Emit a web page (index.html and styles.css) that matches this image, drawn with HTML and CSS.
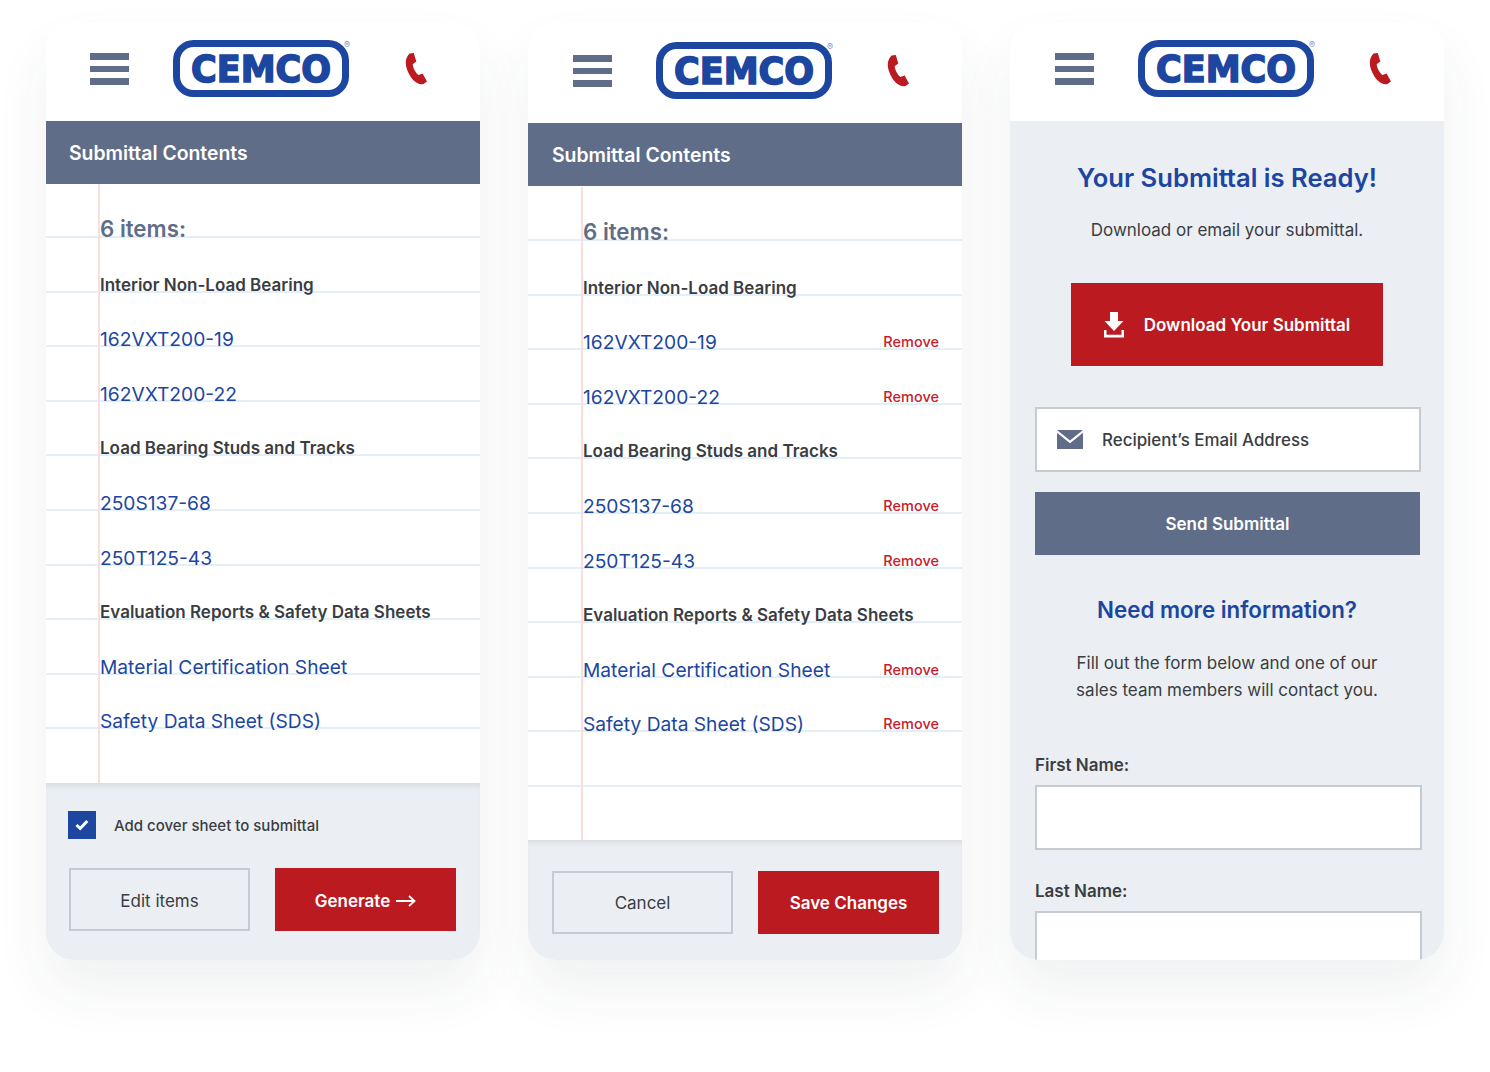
FILE: index.html
```html
<!DOCTYPE html>
<html lang="en">
  <head>
    <meta charset="UTF-8" />
    <meta name="viewport" content="width=device-width, initial-scale=1.0" />
    <title>CEMCO Submittal</title>
    <link rel="stylesheet" href="styles.css">
  </head>
  <body>
    <svg class="icon-defs" width="0" height="0">
      <symbol id="phone-icon" viewBox="0 0 22 32">
        <path d="M4.500 0.500 L8.800 0 L11.300 8.600 L7.700 11.200 C8 15 10.600 19.600 13.400 22 L17.600 20.400 L22 28.400 L18.500 31 C12.400 32.400 7.200 27.400 3.800 20.600 C0.800 14.400 -1.400 6.600 4.500 0.500 Z" fill="#bb1a20" />
      </symbol>
    </svg>

    <div class="phones">
      <!-- Contents -->
      <div class="phone">
        <div class="header">
          <div class="menu"><span></span><span></span><span></span></div>
          <svg class="logo" viewBox="0 0 184 60">
            <rect x="3.500" y="3.500" width="169" height="50" rx="17" fill="#fff" stroke="#1c469f" stroke-width="7" />
            <text x="88" y="42" text-anchor="middle" textLength="140" lengthAdjust="spacingAndGlyphs" class="logo-word">CEMCO</text>
            <text x="171" y="8" class="logo-mark">®</text>
          </svg>
          <svg class="call"><use href="#phone-icon" /></svg>
        </div>
        <div class="title-bar">Submittal Contents</div>
        <div class="sheet">
          <div class="row count">6 items:</div>
          <div class="row category">Interior Non-Load Bearing</div>
          <div class="row"><a>162VXT200-19</a></div>
          <div class="row"><a>162VXT200-22</a></div>
          <div class="row category">Load Bearing Studs and Tracks</div>
          <div class="row"><a>250S137-68</a></div>
          <div class="row"><a>250T125-43</a></div>
          <div class="row category">Evaluation Reports &amp; Safety Data Sheets</div>
          <div class="row"><a>Material Certification Sheet</a></div>
          <div class="row"><a>Safety Data Sheet (SDS)</a></div>
          <div class="row last"></div>
        </div>
        <div class="footer">
          <div class="cover">
            <span class="checkbox">
              <svg width="14" height="12" viewBox="0 0 14 12"><path d="M1.500 6 L5.200 9.500 L12.300 2" fill="none" stroke="#fff" stroke-width="3" /></svg>
            </span>
            <span>Add cover sheet to submittal</span>
          </div>
          <div class="buttons">
            <button class="btn btn-outline">Edit items</button>
            <button class="btn btn-red">Generate
              <svg width="20" height="12" viewBox="0 0 20 12"><path d="M0 6 H18 M13 1 L18.500 6 L13 11" fill="none" stroke="#fff" stroke-width="1.800" /></svg>
            </button>
          </div>
        </div>
      </div>

      <!-- Editing -->
      <div class="phone phone-edit">
        <div class="header">
          <div class="menu"><span></span><span></span><span></span></div>
          <svg class="logo" viewBox="0 0 184 60">
            <rect x="3.500" y="3.500" width="169" height="50" rx="17" fill="#fff" stroke="#1c469f" stroke-width="7" />
            <text x="88" y="42" text-anchor="middle" textLength="140" lengthAdjust="spacingAndGlyphs" class="logo-word">CEMCO</text>
            <text x="171" y="8" class="logo-mark">®</text>
          </svg>
          <svg class="call"><use href="#phone-icon" /></svg>
        </div>
        <div class="title-bar">Submittal Contents</div>
        <div class="sheet">
          <div class="row count">6 items:</div>
          <div class="row category">Interior Non-Load Bearing</div>
          <div class="row"><a>162VXT200-19</a><span class="remove">Remove</span></div>
          <div class="row"><a>162VXT200-22</a><span class="remove">Remove</span></div>
          <div class="row category">Load Bearing Studs and Tracks</div>
          <div class="row"><a>250S137-68</a><span class="remove">Remove</span></div>
          <div class="row"><a>250T125-43</a><span class="remove">Remove</span></div>
          <div class="row category">Evaluation Reports &amp; Safety Data Sheets</div>
          <div class="row"><a>Material Certification Sheet</a><span class="remove">Remove</span></div>
          <div class="row"><a>Safety Data Sheet (SDS)</a><span class="remove">Remove</span></div>
          <div class="row"></div>
          <div class="row last"></div>
        </div>
        <div class="footer">
          <div class="buttons">
            <button class="btn btn-outline">Cancel</button>
            <button class="btn btn-red">Save Changes</button>
          </div>
        </div>
      </div>

      <!-- Ready -->
      <div class="phone phone-ready">
        <div class="header">
          <div class="menu"><span></span><span></span><span></span></div>
          <svg class="logo" viewBox="0 0 184 60">
            <rect x="3.500" y="3.500" width="169" height="50" rx="17" fill="#fff" stroke="#1c469f" stroke-width="7" />
            <text x="88" y="42" text-anchor="middle" textLength="140" lengthAdjust="spacingAndGlyphs" class="logo-word">CEMCO</text>
            <text x="171" y="8" class="logo-mark">®</text>
          </svg>
          <svg class="call"><use href="#phone-icon" /></svg>
        </div>
        <div class="ready">
          <h1>Your Submittal is Ready!</h1>
          <p class="ready-text">Download or email your submittal.</p>
          <button class="btn btn-red btn-download">
            <svg width="20" height="26" viewBox="0 0 20 26"><path d="M6 0 H14 V9 H19.500 L10 19 L0.500 9 H6 Z M0 18 H2.500 V22.700 H17.500 V18 H20 V25.500 H0 Z" fill="#fff" /></svg>
            Download Your Submittal
          </button>
          <div class="email-field">
            <svg width="26" height="19" viewBox="0 0 26 19"><path d="M0 0 H26 L13 10.500 Z M0 2.800 L13 13.300 L26 2.800 V19 H0 Z" fill="#5f6d88" /></svg>
            <span>Recipient’s Email Address</span>
          </div>
          <button class="btn btn-slate">Send Submittal</button>
          <h2>Need more information?</h2>
          <p class="info-text">Fill out the form below and one of our<br />sales team members will contact you.</p>
          <label class="field-label">First Name:</label>
          <div class="text-field"></div>
          <label class="field-label">Last Name:</label>
          <div class="text-field"></div>
        </div>
      </div>
    </div>
  </body>
</html>
```

FILE: styles.css
```css
body {
  font-family: Inter, "Liberation Sans", sans-serif;
  background-color: #fff;
  margin: 0;
  padding: 0;
  color: #3a3d42;
}

.icon-defs {
  display: block;
  height: 0;
}

.logo-word {
  font-family: "DejaVu Sans", sans-serif;
  font-size: 37px;
  font-weight: 700;
  fill: #1c469f;
  stroke: #1c469f;
  stroke-width: 1.600px;
}

.logo-mark {
  font-family: Inter, sans-serif;
  font-size: 9px;
  fill: #7d93c6;
}

.phones {
  display: flex;
  gap: 48px;
  padding: 22px 0 0 46px;
  height: 1050px;
  box-sizing: border-box;
}

.phone {
  display: flex;
  flex-direction: column;
  width: 434px;
  height: 938px;
  background-color: #fff;
  border-radius: 28px;
  overflow: hidden;
  box-shadow: 0 30px 55px rgba(40, 50, 70, 0.07);
}

/* header */
.header {
  display: flex;
  align-items: flex-start;
  flex-shrink: 0;
  height: 99px;
  box-sizing: border-box;
  padding: 18px 0 0 44px;
}

.phone-edit .header {
  height: 101px;
  padding: 20px 0 0 45px;
}

.phone-ready .header {
  padding-left: 45px;
}

.menu {
  display: flex;
  flex-direction: column;
  gap: 6px;
  width: 38.500px;
  margin: 13px 0.500px 0 0;
}

.menu span {
  display: block;
  height: 6.500px;
  background-color: #5f6d88;
}

.logo {
  width: 184px;
  height: 60px;
  margin-left: 44px;
}

.call {
  width: 22px;
  height: 32px;
  margin: 13px 0 0 48px;
}

.phone-edit .call,
.phone-ready .call {
  margin-left: 47px;
}

.title-bar {
  flex-shrink: 0;
  height: 63px;
  line-height: 64px;
  padding-left: 23px;
  background-color: #5f6d88;
  color: #fff;
  font-size: 19.400px;
  font-weight: 600;
}

.phone-edit .title-bar {
  padding-left: 24px;
}

/* lined paper list */
.sheet {
  position: relative;
  flex-shrink: 0;
  margin-top: -0.500px;
}

.phone-edit .sheet {
  margin-top: 0.500px;
}

.sheet::before {
  content: "";
  position: absolute;
  top: 0;
  bottom: 0;
  left: 52px;
  width: 2px;
  background-color: #fadede;
}

.phone-edit .sheet::before {
  left: 53px;
}

.row {
  display: flex;
  align-items: flex-end;
  justify-content: space-between;
  height: 54.600px;
  box-sizing: border-box;
  padding: 0 23px 0 54px;
  border-bottom: 2px solid #e3eff8;
  font-size: 19.200px;
  line-height: 12px;
  color: #1c469f;
}

.phone-edit .row {
  padding-left: 55px;
}

.row.last {
  height: 53.600px;
  border-bottom: 0;
}

.phone-edit .row.last {
  height: 52.600px;
}

.count {
  font-size: 22.300px;
  line-height: 14px;
  font-weight: 600;
  color: #5f6d88;
}

.category {
  font-size: 17px;
  line-height: 11px;
  font-weight: 600;
  color: #3a3d42;
}

.remove {
  font-size: 14.500px;
  font-weight: 500;
  color: #c8202a;
}

/* footer */
.footer {
  flex-grow: 1;
  padding: 28px 24px 0 23px;
  background-color: #ebeff3;
  box-shadow: inset 0 6px 6px -4px rgba(60, 80, 100, 0.14);
}

.phone-edit .footer {
  padding: 31px 23px 0 24px;
}

.cover {
  display: flex;
  align-items: center;
  gap: 18px;
  height: 28px;
  margin-left: -1px;
  margin-bottom: 29px;
  font-size: 15px;
  font-weight: 500;
}

.checkbox {
  display: flex;
  align-items: center;
  justify-content: center;
  width: 28px;
  height: 28px;
  background-color: #1c469f;
}

.buttons {
  display: flex;
  gap: 25px;
}

.btn {
  display: flex;
  align-items: center;
  justify-content: center;
  gap: 6px;
  width: 181px;
  height: 63px;
  padding: 0;
  box-sizing: border-box;
  border: none;
  border-radius: 0;
  font-family: inherit;
  font-size: 17px;
}

.buttons .btn {
  padding-top: 2px;
}

.btn-outline {
  background-color: transparent;
  border: 2px solid #c5cbd0;
  color: #3a3d42;
}

.btn-red {
  background-color: #bb1a20;
  color: #fff;
  font-weight: 600;
}

.btn-slate {
  width: 385px;
  margin-top: 20px;
  background-color: #5f6d88;
  color: #fff;
  font-weight: 600;
}

/* submittal ready */
.ready {
  flex-grow: 1;
  padding: 0 25px;
  background-color: #ebeff3;
  text-align: center;
}

.ready h1 {
  margin: 41px 0 0;
  font-size: 25.600px;
  line-height: 32px;
  font-weight: 600;
  color: #1c469f;
}

.ready-text {
  margin: 25px 0 0;
  font-size: 17px;
  line-height: 22px;
}

.btn-download {
  width: 312px;
  height: 83px;
  gap: 20px;
  margin: 42px 0 0 36px;
}

.email-field {
  display: flex;
  align-items: center;
  gap: 19px;
  width: 386px;
  height: 65px;
  box-sizing: border-box;
  margin-top: 41px;
  padding-left: 20px;
  background-color: #fff;
  border: 2px solid #c5cbd0;
  font-size: 16.900px;
  font-weight: 500;
}

.ready h2 {
  margin: 41px 0 0;
  font-size: 22.300px;
  line-height: 28px;
  font-weight: 600;
  color: #1c469f;
}

.info-text {
  margin: 26px 0 0;
  font-size: 17px;
  line-height: 27px;
}

.field-label {
  display: block;
  margin-top: 50px;
  font-size: 17px;
  line-height: 22px;
  font-weight: 600;
  text-align: left;
}

.text-field {
  width: 387px;
  height: 65px;
  box-sizing: border-box;
  margin-top: 9px;
  background-color: #fff;
  border: 2px solid #c5cbd0;
}

.text-field + .field-label {
  margin-top: 30px;
}
```
